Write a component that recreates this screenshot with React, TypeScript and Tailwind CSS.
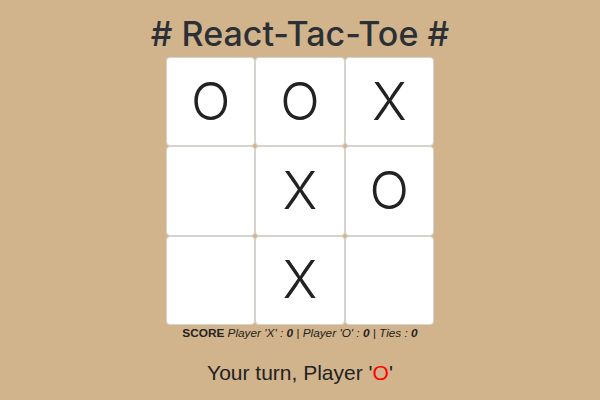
import React from "react";

const board = ["O", "O", "X", "", "X", "O", "", "X", ""];

function Cell({ value }: { value: string }) {
  return (
    <div className="flex items-center justify-center bg-white border border-[#d6d3ce] rounded-[4px] text-[52px] leading-none font-light text-[#222] [font-family:Inter,'Liberation_Sans',sans-serif]">
      {value}
    </div>
  );
}

export default function App() {
  return (
    <div className="w-[600px] h-[400px] bg-[#d2b48c] flex flex-col items-center pt-[16px] [font-family:'Liberation_Sans',Arial,sans-serif] overflow-hidden">
      <h1 className="text-[34px] leading-[36px] font-medium text-[#2c3035] [font-family:Inter,sans-serif]"># React-Tac-Toe #</h1>
      <div className="mt-[5px] w-[268px] h-[268px] grid grid-cols-3 grid-rows-3">
        {board.map((v, i) => (
          <Cell key={i} value={v} />
        ))}
      </div>
      <p className="mt-[1px] text-[11.8px] leading-[15px] text-[#222]">
        <b>SCORE</b>{" "}
        <i>
          Player 'X' : <b>0</b> | Player 'O' : <b>0</b> | Ties : <b>0</b>
        </i>
      </p>
      <p className="mt-[19px] text-[21px] leading-[26px] text-[#222]">
        Your turn, Player '<span className="text-[#ff0000]">O</span>'
      </p>
    </div>
  );
}
